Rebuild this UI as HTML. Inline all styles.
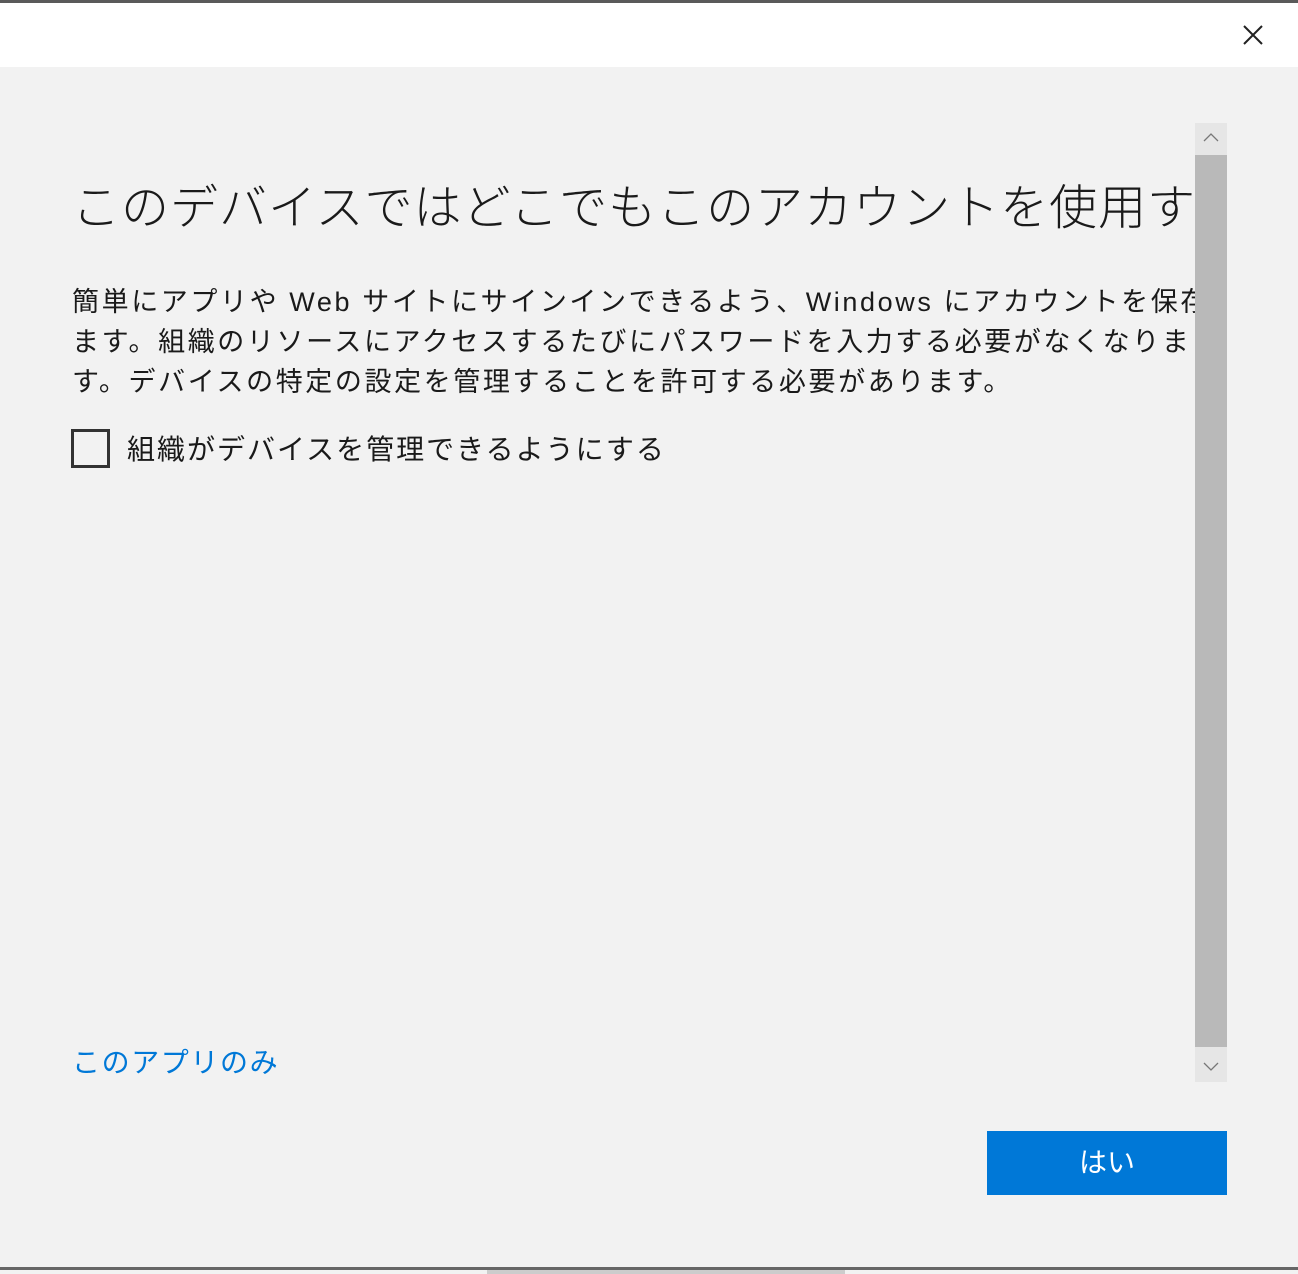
<!DOCTYPE html>
<html><head><meta charset="utf-8"><style>
*{margin:0;padding:0;box-sizing:border-box}
html,body{width:1298px;height:1274px;overflow:hidden;background:#f2f2f2;font-family:"Liberation Sans","Noto Sans CJK JP",sans-serif}
.top{position:absolute;left:0;top:0;width:1298px;height:3px;background:#5a5a5a}
.hdr{position:absolute;left:0;top:3px;width:1298px;height:64px;background:#fff}
.x{position:absolute;left:1242px;top:24px}
.clip{position:absolute;left:72px;top:120px;width:1123px;height:1000px;overflow:hidden}
h1{position:absolute;left:0;top:48px;font-size:48px;font-weight:300;color:#1a1a1a;white-space:nowrap;letter-spacing:1px}
.p{position:absolute;left:0;top:162px;font-size:27px;line-height:40px;color:#1a1a1a;letter-spacing:2.6px;white-space:nowrap}
.cb{position:absolute;left:71px;top:429px;width:39px;height:39px;border:3px solid #333}
.cbl{position:absolute;left:127px;top:430px;font-size:28px;line-height:40px;color:#1a1a1a;letter-spacing:2px;white-space:nowrap}
.sb{position:absolute;left:1195px;top:123px;width:32px;height:959px;background:#e6e6e6}
.th{position:absolute;left:1195px;top:155px;width:32px;height:892px;background:#b9b9b9}
.link{position:absolute;left:72px;top:1043px;font-size:28px;line-height:40px;color:#0078d7;letter-spacing:1.6px;white-space:nowrap}
.btn{position:absolute;left:987px;top:1131px;width:240px;height:64px;background:#0078d7;color:#fff;font-size:28px;text-align:center;line-height:64px}
.bot{position:absolute;left:0;top:1267px;width:1298px;height:3px;background:#666}
.bot2{position:absolute;left:487px;top:1270px;width:358px;height:4px;background:#ccc}
</style></head><body>
<div class="top"></div>
<div class="hdr"></div>
<svg class="x" width="22" height="22" viewBox="0 0 22 22"><path d="M2 2L20 20M20 2L2 20" stroke="#222" stroke-width="2"/></svg>
<div class="clip">
<h1>このデバイスではどこでもこのアカウントを使用する</h1>
<div class="p">簡単にアプリや Web サイトにサインインできるよう、Windows にアカウントを保存し<br>ます。組織のリソースにアクセスするたびにパスワードを入力する必要がなくなりま<br>す。デバイスの特定の設定を管理することを許可する必要があります。</div>
</div>
<div class="cb"></div>
<div class="cbl">組織がデバイスを管理できるようにする</div>
<div class="sb"></div>
<div class="th"></div>
<svg style="position:absolute;left:1203px;top:132px" width="16" height="12"><path d="M1 9L8 2L15 9" stroke="#777" stroke-width="1.3" fill="none"/></svg>
<svg style="position:absolute;left:1203px;top:1060px" width="16" height="12"><path d="M1 3L8 10L15 3" stroke="#777" stroke-width="1.3" fill="none"/></svg>
<div class="link">このアプリのみ</div>
<div class="btn">はい</div>
<div class="bot"></div>
<div class="bot2"></div>
</body></html>
